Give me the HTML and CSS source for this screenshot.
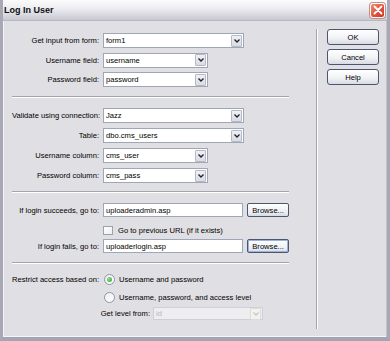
FILE: index.html
```html
<!DOCTYPE html>
<html>
<head>
<meta charset="utf-8">
<link rel="stylesheet" href="styles.css">
</head>
<body>
<div class="window">
  <div class="titlebar">
    <span class="title">Log In User</span>
    <span class="close"><svg width="10" height="10" viewBox="0 0 10 10"><path d="M1.5 1.5 L8.5 8.5 M8.5 1.5 L1.5 8.5" stroke="#fff" stroke-width="1.8" stroke-linecap="round"/></svg></span>
  </div>
  <div class="client">
    <div class="form">
      <div class="group g1">
        <div class="row"><span class="label">Get input from form:</span><div class="select w141"><span class="val">form1</span><span class="arrow"><svg width="6" height="4" viewBox="0 0 6 4"><path d="M0.5 0.5 L3 3 L5.5 0.5" fill="none" stroke="#222" stroke-width="1.3"/></svg></span></div></div>
        <div class="row"><span class="label">Username field:</span><div class="select w105"><span class="val">username</span><span class="arrow"><svg width="6" height="4" viewBox="0 0 6 4"><path d="M0.5 0.5 L3 3 L5.5 0.5" fill="none" stroke="#222" stroke-width="1.3"/></svg></span></div></div>
        <div class="row"><span class="label">Password field:</span><div class="select w105"><span class="val">password</span><span class="arrow"><svg width="6" height="4" viewBox="0 0 6 4"><path d="M0.5 0.5 L3 3 L5.5 0.5" fill="none" stroke="#222" stroke-width="1.3"/></svg></span></div></div>
      </div>
      <div class="sep s1"></div>
      <div class="group g2">
        <div class="row"><span class="label">Validate using connection:</span><div class="select w141"><span class="val">Jazz</span><span class="arrow"><svg width="6" height="4" viewBox="0 0 6 4"><path d="M0.5 0.5 L3 3 L5.5 0.5" fill="none" stroke="#222" stroke-width="1.3"/></svg></span></div></div>
        <div class="row"><span class="label">Table:</span><div class="select w141"><span class="val">dbo.cms_users</span><span class="arrow"><svg width="6" height="4" viewBox="0 0 6 4"><path d="M0.5 0.5 L3 3 L5.5 0.5" fill="none" stroke="#222" stroke-width="1.3"/></svg></span></div></div>
        <div class="row"><span class="label">Username column:</span><div class="select w105"><span class="val">cms_user</span><span class="arrow"><svg width="6" height="4" viewBox="0 0 6 4"><path d="M0.5 0.5 L3 3 L5.5 0.5" fill="none" stroke="#222" stroke-width="1.3"/></svg></span></div></div>
        <div class="row"><span class="label">Password column:</span><div class="select w105"><span class="val">cms_pass</span><span class="arrow"><svg width="6" height="4" viewBox="0 0 6 4"><path d="M0.5 0.5 L3 3 L5.5 0.5" fill="none" stroke="#222" stroke-width="1.3"/></svg></span></div></div>
      </div>
      <div class="sep s2"></div>
      <div class="group g3">
        <div class="row r14"><span class="label">If login succeeds, go to:</span><div class="input"><span class="val">uploaderadmin.asp</span></div><button class="browse">Browse...</button></div>
        <div class="row rcheck"><span class="label"></span><span class="check"></span><span class="opt">Go to previous URL (if it exists)</span></div>
        <div class="row r14"><span class="label">If login fails, go to:</span><div class="input"><span class="val">uploaderlogin.asp</span></div><button class="browse focus">Browse...</button></div>
      </div>
      <div class="sep s3"></div>
      <div class="group g4">
        <div class="row r14"><span class="label">Restrict access based on:</span><span class="radio on"></span><span class="opt">Username and password</span></div>
        <div class="row r14 rr2"><span class="label"></span><span class="radio"></span><span class="opt">Username, password, and access level</span></div>
        <div class="row r13 rr3"><span class="label lvl">Get level from:</span><div class="select disabled w110"><span class="val">id</span><span class="arrow"><svg width="6" height="4" viewBox="0 0 6 4"><path d="M0.5 0.5 L3 3 L5.5 0.5" fill="none" stroke="#c4c8c0" stroke-width="1.3"/></svg></span></div></div>
      </div>
    </div>
    <div class="vsep"></div>
    <div class="buttons">
      <button class="btn">OK</button>
      <button class="btn">Cancel</button>
      <button class="btn">Help</button>
    </div>
  </div>
</div>
</body>
</html>
```
FILE: styles.css
```css
html, body {
  margin: 0;
  padding: 0;
  background: #e0dfe3;
}
body {
  font-family: "Liberation Sans", Arial, sans-serif;
  font-size: 7.6px;
  color: #000;
}
.window {
  width: 390px;
  height: 341px;
  box-sizing: border-box;
  display: flex;
  flex-direction: column;
  background: #e0dfe3;
  border-left: 3px solid #a9a9b5;
  border-right: 3px solid #a9a9b5;
  border-bottom: 4px solid #a4a4b2;
  box-shadow: inset 1px 0 0 #f4f4f7, inset -1px 0 0 #c2c2cc, inset 0 -1px 0 #f6f6f8;
}
.titlebar {
  height: 20px;
  flex: none;
  display: flex;
  align-items: center;
  justify-content: space-between;
  padding: 0 2px 0 1px;
  background: linear-gradient(#fbfbfc 0%, #f0f0f4 35%, #d8d8e0 75%, #c8c8d2 100%);
  border-bottom: 1px solid #b8b8c4;
}
.title {
  font-weight: bold;
  font-size: 9px;
  color: #101010;
}
.close {
  width: 15px;
  height: 15px;
  box-sizing: border-box;
  border: 1px solid #fff;
  border-radius: 3px;
  background: linear-gradient(135deg, #f08a76, #e0523a 55%, #c8381f);
  display: flex;
  align-items: center;
  justify-content: center;
  box-shadow: 0 0 0 1px #c58c86;
}
.client {
  flex: 1;
  display: flex;
  padding-left: 9px;
}
.form {
  width: 277px;
  display: flex;
  flex-direction: column;
  padding-top: 12px;
}
.group {
  display: flex;
  flex-direction: column;
}
.g1 { gap: 4.5px; }
.g2 { gap: 5px; margin-top: 10px; }
.g3 { margin-top: 10px; }
.g4 { margin-top: 8px; }
.row {
  display: flex;
  align-items: center;
  height: 15px;
}
.r14 { height: 14px; }
.r13 { height: 13px; }
.rcheck { height: 14px; margin-top: 6px; margin-bottom: 2px; }
.rr2 { margin-top: 4px; }
.rr3 { margin-top: 3px; }
.label {
  width: 87px;
  flex: none;
  text-align: right;
  margin-right: 4px;
  white-space: nowrap;
}
.label.lvl {
  width: 138px;
  margin-right: 3px;
}
.sep {
  height: 0;
  border-top: 1px solid #a4a4ac;
  border-bottom: 1px solid #ffffff;
  flex: none;
}
.s1 { margin-top: 9px; }
.s2 { margin-top: 8px; }
.s3 { margin-top: 9px; }
.select, .input {
  height: 100%;
  box-sizing: border-box;
  background: #fff;
  border: 1px solid #9fa7b7;
  display: flex;
  align-items: center;
  justify-content: space-between;
  padding: 0 1px 0 2px;
}
.w141 { width: 141px; }
.w105 { width: 105px; }
.w110 { width: 110px; }
.input { width: 141px; }
.val { white-space: nowrap; }
.arrow {
  width: 11px;
  height: 12px;
  box-sizing: border-box;
  background: linear-gradient(#eef0f5, #d9dce5);
  border: 1px solid #b5bac6;
  border-radius: 1px;
  display: flex;
  align-items: center;
  justify-content: center;
}
.select.disabled {
  background: #eeedf0;
  border-color: #cfcfd6;
  color: #b8b8be;
}
.select.disabled .arrow {
  background: #f2f2f0;
  border-color: #dcdcd8;
}
.browse {
  margin-left: 4px;
  width: 42px;
  height: 14px;
  box-sizing: border-box;
  padding: 0;
  font: inherit;
  color: #000;
  border: 1px solid #4d5670;
  border-radius: 2px;
  background: linear-gradient(#ffffff, #eceef3 70%, #d6d9e2);
}
.browse.focus {
  box-shadow: inset 0 0 0 1px #9bb2dc;
}
.check {
  width: 10px;
  height: 9px;
  box-sizing: border-box;
  border: 1px solid #9aa2ae;
  background: linear-gradient(135deg, #ffffff, #eeeef0);
  flex: none;
}
.radio {
  width: 11px;
  height: 11px;
  box-sizing: border-box;
  border: 1px solid #8c96a8;
  border-radius: 50%;
  background: linear-gradient(135deg, #eeeef2, #ffffff);
  flex: none;
  margin-left: 1px;
  display: flex;
  align-items: center;
  justify-content: center;
}
.radio.on::after {
  content: "";
  width: 5px;
  height: 5px;
  border-radius: 50%;
  background: radial-gradient(circle at 35% 35%, #8ee08c, #2ea32e);
}
.opt {
  margin-left: 4px;
  white-space: nowrap;
}
.check + .opt { margin-left: 5px; }
.vsep {
  width: 0;
  border-left: 1px solid #a4a4ac;
  border-right: 1px solid #fff;
  margin: 8px 0 8px 27px;
}
.buttons {
  display: flex;
  flex-direction: column;
  gap: 4px;
  padding-top: 8px;
  margin-left: 9px;
}
.btn {
  width: 52px;
  height: 16px;
  box-sizing: border-box;
  padding: 0;
  font: inherit;
  color: #000;
  border: 1px solid #4d5670;
  border-radius: 3px;
  background: linear-gradient(#ffffff, #f0f1f5 60%, #d8dbe4);
}
```
